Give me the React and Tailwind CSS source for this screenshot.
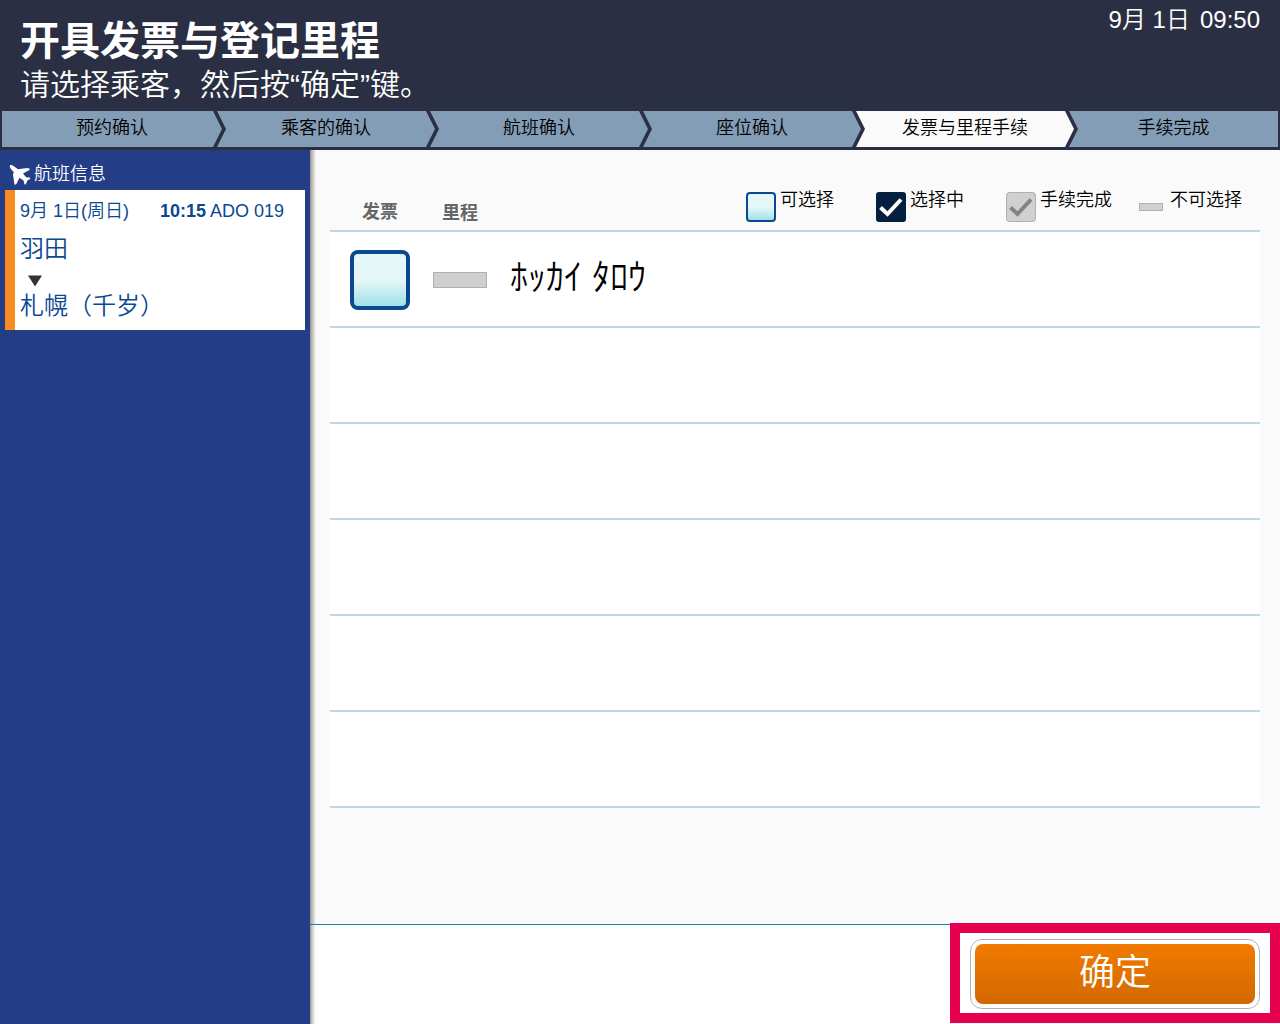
import React, { useState } from "react";

const steps = ["预约确认", "乘客的确认", "航班确认", "座位确认", "发票与里程手续", "手续完成"];
const currentStep = 4;

const firstShape =
  "-ml-0.5 -mr-[5px] bg-[#839db7] [clip-path:polygon(0_0,calc(100%-9px)_0,100%_50%,calc(100%-9px)_100%,0_100%)]";
const middleShape =
  "-mr-[5px] [clip-path:polygon(0_0,calc(100%-9px)_0,100%_50%,calc(100%-9px)_100%,0_100%,9px_50%)]";
const lastShape = "mr-1 bg-[#839db7] [clip-path:polygon(0_0,100%_0,100%_100%,0_100%,9px_50%)]";

function stepClass(i) {
  if (i === 0) return firstShape;
  if (i === steps.length - 1) return lastShape;
  return i === currentStep ? `${middleShape} bg-[#fafafa]` : `${middleShape} bg-[#839db7]`;
}

function Header() {
  return (
    <header className="overflow-hidden bg-[#2a2f43] text-white">
      <div className="flex h-[111px] items-start justify-between px-5">
        <div>
          <h1 className="mt-[17px] text-[40px] leading-[48px] font-bold">开具发票与登记里程</h1>
          <p className="text-[30px] leading-10">请选择乘客，然后按“确定”键。</p>
        </div>
        <time className="mt-1 flex gap-2.5 text-2xl leading-8">
          <span>9月 1日</span>
          <span>09:50</span>
        </time>
      </div>
      <ol className="-mr-0.5 grid grid-cols-6 pb-[3px] pl-1 text-lg text-black">
        {steps.map((s, i) => (
          <li
            key={s}
            aria-current={i === currentStep ? "step" : undefined}
            className={`h-9 text-center leading-[34px] ${stepClass(i)}`}
          >
            {s}
          </li>
        ))}
      </ol>
    </header>
  );
}

function Plane() {
  return (
    <svg viewBox="0 0 22 21" className="h-[21px] w-[22px]" fill="#fff" aria-hidden="true">
      <path d="M1 1.300C1.700.6 3.300 1 4.500 1.900L9 5.300 18.200 4.100 20.800 4.800 20.500 6 14 9.600 17.200 13.200 20.600 13.400 21.500 14.800 18.600 16.300 16.800 20.300 15.500 20.500 14.500 16.500 10.500 13.700 7.300 20.200 5.500 20.700 3.900 9.700 5 8.400 1.600 4.400C.8 3.400.5 1.900 1 1.300Z" />
    </svg>
  );
}

function Sidebar() {
  return (
    <aside className="w-[310px] shrink-0 bg-[#243d87] px-[5px] pt-2">
      <h2 className="flex h-8 items-center gap-[3px] pl-1 text-lg text-white">
        <Plane />
        航班信息
      </h2>
      <section className="h-[140px] border-l-10 border-[#f98c1e] bg-white pt-[7px] pl-[5px] text-[#0b4892]">
        <p className="flex text-lg leading-7">
          <span className="w-[140px]">9月 1日(周日)</span>
          <span>
            <b className="font-bold">10:15</b>
            <span className="ml-1">ADO 019</span>
          </span>
        </p>
        <p className="mt-2 text-2xl leading-8">羽田</p>
        <svg viewBox="0 0 14 12" className="mt-2.5 ml-2 h-3 w-3.5" fill="#333" aria-hidden="true">
          <path d="M0 .5H14L7 11.500Z" />
        </svg>
        <p className="mt-[3px] text-2xl leading-8">札幌（千岁）</p>
      </section>
    </aside>
  );
}

function Tick({ color }) {
  return (
    <svg viewBox="0 0 30 30" className="size-full" fill="none" stroke={color} strokeWidth="4" aria-hidden="true">
      <path d="M4.500 15.500 11.500 22 25 7.500" />
    </svg>
  );
}

function Legend() {
  return (
    <ul className="flex pt-[33px] text-lg leading-[34px] text-black">
      <li className="flex w-[130px] gap-1">
        <span className="mt-[9px] size-[30px] rounded border-2 border-[#0b4892] bg-linear-to-b from-[#e6f7f7] from-50% to-[#9fe0ea]" />
        可选择
      </li>
      <li className="flex w-[130px] gap-1">
        <span className="mt-[9px] size-[30px] rounded-[3px] bg-[#05203f]">
          <Tick color="#fff" />
        </span>
        选择中
      </li>
      <li className="flex w-[133px] gap-1">
        <span className="mt-[9px] size-[30px] rounded bg-[#d0d0d0] outline-1 -outline-offset-1 outline-[#b0b0b0]">
          <Tick color="#838383" />
        </span>
        手续完成
      </li>
      <li className="flex gap-[7px]">
        <span className="mt-5 h-2 w-6 border border-[#b0b0b0] bg-[#d0d0d0]" />
        不可选择
      </li>
    </ul>
  );
}

function PassengerRow({ name, checked, onChange }) {
  return (
    <li className="flex h-24 items-center border-b-2 border-[#bcd8e3] bg-white pt-0.5 pl-5">
      {name && (
        <>
          <span className="relative size-[60px]">
            <input
              type="checkbox"
              aria-label={`发票 ${name}`}
              checked={checked}
              onChange={onChange}
              className="block size-full appearance-none rounded-lg border-4 border-[#0b4892] bg-linear-to-b from-[#e6f7f7] from-50% to-[#9fe0ea] checked:border-[#05203f] checked:bg-[#05203f] checked:bg-none"
            />
            {checked && (
              <span className="pointer-events-none absolute inset-0">
                <Tick color="#fff" />
              </span>
            )}
          </span>
          <input
            type="checkbox"
            disabled
            aria-label={`里程 ${name}`}
            className="ml-[23px] h-4 w-[54px] appearance-none border border-[#b0b0b0] bg-[#d0d0d0]"
          />
          <span className="ml-[23px] pb-1 text-4xl leading-[54px] text-black">{name}</span>
        </>
      )}
    </li>
  );
}

export default function App() {
  const [checked, setChecked] = useState(false);
  const rows = ["ﾎｯｶｲ ﾀﾛｳ", "", "", "", "", ""];
  return (
    <div className="flex min-h-screen flex-col bg-[#fafafa] font-['Liberation_Sans','Noto_Sans_CJK_SC',sans-serif] font-[350]">
      <Header />
      <div className="flex flex-1">
        <Sidebar />
        <div className="w-1.5 shrink-0 bg-linear-to-r from-[#9b9692] to-[#fafafa]" />
        <main className="-ml-1.5 flex min-w-0 flex-1 flex-col">
          <div className="flex-1 px-5">
            <div className="flex h-[82px] justify-between border-b-2 border-[#bcd8e3] pr-[18px] pl-8">
              <div className="flex gap-11 pt-12 text-lg leading-7 font-bold text-[#666]">
                <span>发票</span>
                <span className="pt-px">里程</span>
              </div>
              <Legend />
            </div>
            <ul>
              {rows.map((name, i) => (
                <PassengerRow key={i} name={name} checked={checked} onChange={() => setChecked(!checked)} />
              ))}
            </ul>
          </div>
          <footer className="flex h-[100px] justify-end border-t border-[#1f7fae] bg-linear-to-r from-transparent to-white to-1%">
            <div className="-mt-0.5 h-[100px] w-[330px] border-10 border-[#e6004f] bg-white px-2.5 pt-1.5">
              <button
                type="button"
                className="h-[70px] w-full rounded-xl border border-[#b3b3b3] bg-white p-1 font-[350] text-white"
              >
                <span className="block h-[60px] rounded-lg bg-linear-to-b from-[#f27a00] to-[#d26900] text-4xl leading-[58px]">
                  确定
                </span>
              </button>
            </div>
          </footer>
        </main>
      </div>
    </div>
  );
}
